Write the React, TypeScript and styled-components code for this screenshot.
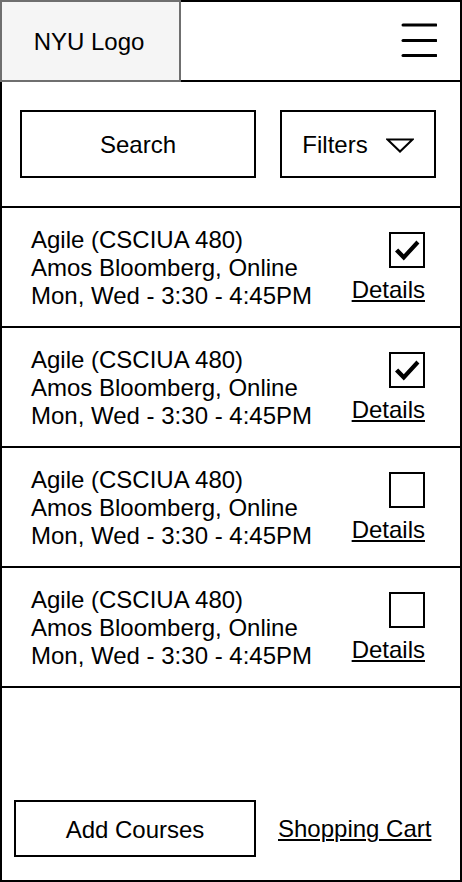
import React from "react";
import styled, { createGlobalStyle } from "styled-components";

const GlobalStyle = createGlobalStyle`
  html, body { margin: 0; padding: 0; background: #fff; }
  body { font-family: "Liberation Sans", Arial, Helvetica, sans-serif; color: #000; }
  * { box-sizing: border-box; }
`;

const Page = styled.div`
  width: 462px;
  height: 882px;
  display: flex;
  flex-direction: column;
  font-size: 24px;
  line-height: 28px;
`;

const Header = styled.header`
  display: flex;
  height: 82px;
  flex: none;
`;

const Logo = styled.div`
  width: 181px;
  height: 100%;
  background: #f5f5f5;
  border: 2px solid #6f6f6f;
  display: flex;
  align-items: center;
  justify-content: center;
  padding: 1px 3px 0 0;
`;

const MenuBar = styled.div`
  flex: 1;
  height: 100%;
  border: 2px solid #000;
  border-left: none;
  display: flex;
  align-items: center;
  justify-content: flex-end;
  padding: 0 23px 2px 0;
`;

const Section = styled.div`
  border: 2px solid #000;
  border-top: none;
`;

const Toolbar = styled(Section)`
  flex: none;
  height: 126px;
  display: flex;
  gap: 24px;
  padding: 28px 24px 28px 18px;
`;

const BoxButton = styled.button<{ $width?: number }>`
  ${(p) => (p.$width ? `width: ${p.$width}px; flex: none;` : "flex: 1;")}
  height: 100%;
  border: 2px solid #000;
  background: #fff;
  font: inherit;
  color: #000;
  display: flex;
  align-items: center;
  justify-content: center;
  gap: 18px;
  padding: 2px 0 0 0;
  cursor: pointer;
`;

const CourseRow = styled(Section)`
  flex: none;
  height: 120px;
  display: flex;
  align-items: center;
  justify-content: space-between;
  padding: 1px 35px 0 29px;
`;

const CourseInfo = styled.div`
  display: flex;
  flex-direction: column;
`;

const RowActions = styled.div`
  display: flex;
  flex-direction: column;
  align-items: flex-end;
  gap: 8px;
`;

const CheckBox = styled.div`
  width: 36px;
  height: 36px;
  border: 2px solid #000;
  display: flex;
  align-items: center;
  justify-content: center;
`;

const TextLink = styled.a`
  color: #000;
  text-decoration: underline;
  text-underline-offset: 2px;
  text-decoration-thickness: 1.5px;
  cursor: pointer;
`;

const Footer = styled(Section)`
  flex: 1;
  display: flex;
  align-items: flex-end;
  padding: 0 12px 23px 12px;
`;

const FooterRow = styled.div`
  display: flex;
  align-items: center;
  gap: 22px;
  height: 57px;
`;

const Hamburger = () => (
  <svg width="36" height="36" viewBox="0 0 36 36" fill="none">
    <g stroke="#000" strokeWidth="3" strokeLinecap="round">
      <line x1="2" y1="3" x2="35" y2="3" />
      <line x1="2" y1="18.5" x2="35" y2="18.5" />
      <line x1="2" y1="33.5" x2="35" y2="33.5" />
    </g>
  </svg>
);

const TriangleDown = () => (
  <svg width="28" height="15" viewBox="0 0 28 15" fill="none">
    <path d="M1.5 1.5 H26.5 L14 13.5 Z" stroke="#000" strokeWidth="2" strokeLinejoin="miter" />
  </svg>
);

const CheckMark = () => (
  <svg width="32" height="32" viewBox="0 0 32 32">
    <path d="M4 17.5 L7.2 14.5 L12.8 20.2 L25.4 6.6 L28.4 9.5 L12.8 26.4 Z" fill="#000" />
  </svg>
);

type Course = { checked: boolean };

const courses: Course[] = [
  { checked: true },
  { checked: true },
  { checked: false },
  { checked: false },
];

export default function App() {
  return (
    <>
      <GlobalStyle />
      <Page>
        <Header>
          <Logo>NYU Logo</Logo>
          <MenuBar>
            <Hamburger />
          </MenuBar>
        </Header>
        <Toolbar>
          <BoxButton $width={236}>Search</BoxButton>
          <BoxButton>
            <span>Filters</span>
            <TriangleDown />
          </BoxButton>
        </Toolbar>
        {courses.map((c, i) => (
          <CourseRow key={i}>
            <CourseInfo>
              <span>Agile (CSCIUA 480)</span>
              <span>Amos Bloomberg, Online</span>
              <span>Mon, Wed - 3:30 - 4:45PM</span>
            </CourseInfo>
            <RowActions>
              <CheckBox>{c.checked && <CheckMark />}</CheckBox>
              <TextLink>Details</TextLink>
            </RowActions>
          </CourseRow>
        ))}
        <Footer>
          <FooterRow>
            <BoxButton $width={242}>Add Courses</BoxButton>
            <TextLink>Shopping Cart</TextLink>
          </FooterRow>
        </Footer>
      </Page>
    </>
  );
}
